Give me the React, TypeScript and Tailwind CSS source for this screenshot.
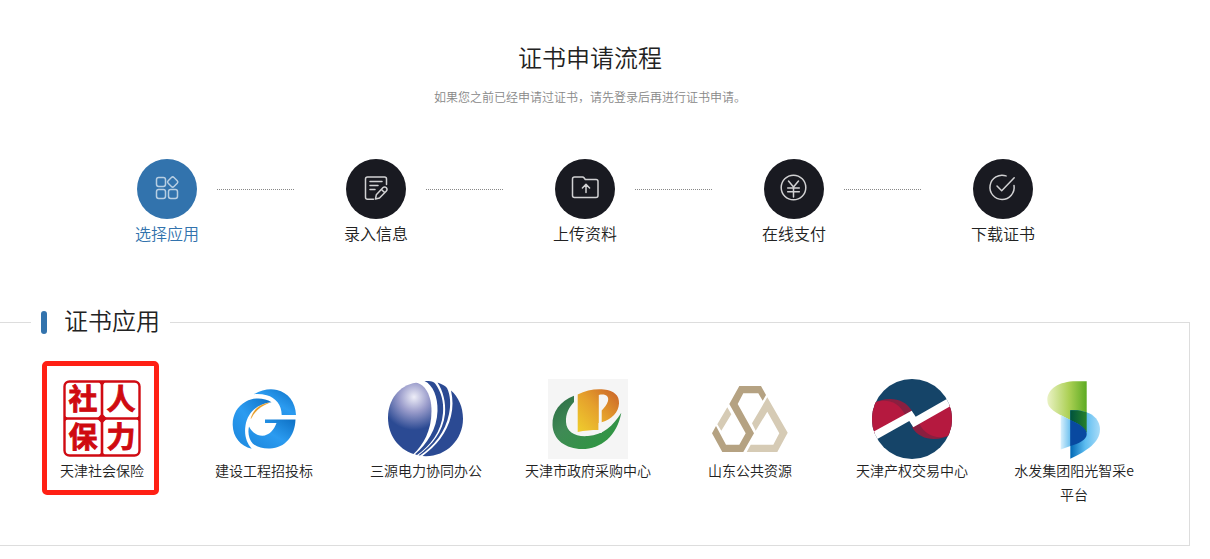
import type { ReactNode } from "react";

type Step = { label: string; icon: ReactNode; active?: boolean };
type CertApp = { name: string; logo: ReactNode; highlighted?: boolean };

const steps: Step[] = [
  {
    label: "选择应用",
    active: true,
    icon: (
      <>
        <rect x="19.5" y="18.5" width="9" height="9" rx="2.2" />
        <rect x="19.5" y="30.5" width="9" height="9" rx="2.2" />
        <rect x="31.5" y="30.5" width="9" height="9" rx="2.2" />
        <rect x="31.6" y="18.9" width="8.2" height="8.2" rx="1.8" transform="rotate(45 35.7 23)" />
      </>
    ),
  },
  {
    label: "录入信息",
    icon: (
      <>
        <path d="M40.5 25.5V20a2 2 0 0 0-2-2h-17a2 2 0 0 0-2 2v18.300a2 2 0 0 0 2 2h6" />
        <path d="M24 22.500h12M24 26.500h8M24 30.500h5" />
        <path d="M29.500 40l.8-4.200 6.800-7.200a2.100 2.100 0 0 1 3 0l.3.300a2.100 2.100 0 0 1 0 3l-6.900 7.200zM35.500 30.500l3 3" />
      </>
    ),
  },
  {
    label: "上传资料",
    icon: (
      <>
        <path d="M19.500 18h8a2 2 0 0 1 1.500.8l1.300 1.700h10.700a2 2 0 0 1 2 2v14a2 2 0 0 1-2 2H19.500a2 2 0 0 1-2-2V20a2 2 0 0 1 2-2z" />
        <path d="M31 33.500v-8M27.400 29l3.600-3.600 3.600 3.600" />
      </>
    ),
  },
  {
    label: "在线支付",
    icon: (
      <>
        <circle cx="29.500" cy="28.500" r="12.300" />
        <path d="M24.500 22l5 6 5-6M29.500 28v10M23.700 29h11.600M23.700 32.700h11.600" />
      </>
    ),
  },
  {
    label: "下载证书",
    icon: (
      <>
        <path d="M33 16.900a12.100 12.100 0 1 0 8 9.500" />
        <path d="M24 27l4.700 4.700L41.200 18.700" />
      </>
    ),
  },
];

const certApps: CertApp[] = [
  {
    name: "天津社会保险",
    highlighted: true,
    logo: (
      <>
        <rect x="2.500" y="2.500" width="75" height="74" rx="5" fill="#fff" stroke="#d00a12" strokeWidth="2.400" />
        <path d="M40 2v75M2 39.500h76" stroke="#d00a12" strokeWidth="2.600" />
        <path d="M36 2h8l-4 5zM36 77h8l-4-4zM35 39.500l5-5 5 5-5 5zM2 36v7l4-3.500zM78 36v7l-4-3.500z" fill="#d00a12" />
        <g
          fill="#cf0a10"
          stroke="#cf0a10"
          strokeWidth=".8"
          fontSize="29"
          fontWeight="700"
          textAnchor="middle"
          fontFamily="'Noto Sans CJK SC', sans-serif"
        >
          <text x="21" y="31">社</text>
          <text x="59" y="31">人</text>
          <text x="21" y="69">保</text>
          <text x="59" y="69">力</text>
        </g>
      </>
    ),
  },
  {
    name: "建设工程招投标",
    logo: (
      <>
        <defs>
          <linearGradient id="gBlue" x1="0" y1="1" x2="1" y2="0">
            <stop offset="0" stopColor="#1c86dc" />
            <stop offset=".5" stopColor="#2b9bf0" />
            <stop offset="1" stopColor="#0d70c4" />
          </linearGradient>
        </defs>
        <path d="M30 15.200C38 10.500 46 9.500 53 11c11 2.500 18.500 12 19 25H57.700c0-10-6-17.500-15-19.800-4-1-8-1.300-12.700-1z" fill="url(#gBlue)" />
        <path d="M47.500 23.200C40 18.500 30 18.200 22 22.500 13 27.500 8.500 36 8.700 46c.3 12 7.500 21 19 23.700C22.500 64 20 56 21.500 46.500 23.500 34 33 24.500 47.500 23.200z" fill="url(#gBlue)" />
        <path d="M41 40.500h30.500C71 57 61 69 46 69.500c-7 .3-13-1.500-17.300-5C25 60 23.500 54 25 47.500c3 6 8 9.300 13.500 9.200 6.500-.2 11.500-5.700 14-12.700H41z" fill="url(#gBlue)" />
        <path d="M27 39.500C29 31.500 35 25.500 44.500 24 37 27 31 31.500 27 39.500z" fill="#e59a20" stroke="#e59a20" strokeWidth=".4" />
      </>
    ),
  },
  {
    name: "三源电力协同办公",
    logo: (
      <>
        <defs>
          <radialGradient id="globeShine" gradientUnits="userSpaceOnUse" cx="28" cy="18" r="33">
            <stop offset="0" stopColor="#eeeef8" />
            <stop offset=".45" stopColor="#9a9ccb" />
            <stop offset="1" stopColor="#2b4a93" />
          </radialGradient>
        </defs>
        <path d="M30 3.700C13 6 2 21 2 38.500 2 56 12 70 27.500 75 37 66 45.500 52 45.500 32 45.500 16 39 5 30 3.700z" fill="url(#globeShine)" />
        <path d="M38.500 2C45 2 48 2.500 49.500 5 55 13 58 22 57 34 55.500 53 44 67 31 76l-2-.7C41 65 51 50 51.500 32 52 18 47 6 38.500 2z" fill="#2b4a93" />
        <path d="M51.500 3.500C56 5 59 6.500 61 9c3.500 7 4 17 2 26-3.500 18-15 32-29 41.500l-1.500-.3C46 66 57 53 59 35c1-12-2-23-7.500-31.500z" fill="#2b4a93" />
        <path d="M65 11.500C72.500 18 77 28 77 39.700 77 61 60 77.200 40 77.200l-3.500-.2C50 67 61 54 65 37c2-8 2-17 0-25.500z" fill="#2b4a93" />
      </>
    ),
  },
  {
    name: "天津市政府采购中心",
    logo: (
      <>
        <defs>
          <linearGradient id="pOrange" x1="0" y1="1" x2="1" y2="0">
            <stop offset="0" stopColor="#efce2e" />
            <stop offset=".5" stopColor="#e5a02c" />
            <stop offset="1" stopColor="#c9602a" />
          </linearGradient>
          <linearGradient id="pGreen" x1="0" y1="0" x2="1" y2="1">
            <stop offset="0" stopColor="#2c6b45" />
            <stop offset=".4" stopColor="#3f8a55" />
            <stop offset="1" stopColor="#2a9a3c" />
          </linearGradient>
        </defs>
        <rect width="80" height="80" fill="#f5f5f5" />
        <path d="M26 16.700C12 22 4 33 4.500 46 5 61 18 70 34 70 53 70 69 57 73.300 33.700 65 47 55 56 40 57 27 58 18.500 53 18 43c-.3-8 2.500-14 8-20z" fill="url(#pGreen)" />
        <path d="M29.700 15.500C38 11 48 9.500 56 10.500c10 1 15.500 6 15 14-.5 9-7 15.500-17.300 18.800L50.500 44v7c-7 0-14 .5-20.800 2z" fill="url(#pOrange)" />
        <path d="M50.800 16c6.500-1.500 10.500 1 9.200 6-1 4-4 7-6.300 9.500V54h-2.900z" fill="#f5f5f5" />
      </>
    ),
  },
  {
    name: "山东公共资源",
    logo: (
      <>
        <path d="M29.300 7H51l5 9-3.300 5.700-4.400-7.400h-15L27.700 25 44 54.300 33.300 73h-21L2 54.300 6 47l10 18.700h13.300l6.400-11.400L19.300 25z" fill="#b5a282" />
        <path d="M17.300 28.300l4 7-10 16.400-4-6.400zM57.300 18.300l20.400 35.400L67.300 73H36.700l4-7.300h22.600l6-11.400-12-21.600-11.600 19-3.700-7.400z" fill="#d6cbb5" />
      </>
    ),
  },
  {
    name: "天津产权交易中心",
    logo: (
      <>
        <defs>
          <clipPath id="roundel">
            <circle cx="40" cy="40" r="40" />
          </clipPath>
        </defs>
        <g clipPath="url(#roundel)">
          <rect width="80" height="80" fill="#154468" />
          <path d="M0 25C14 17 32 18 40 32L0 56z" fill="#8a1f40" />
          <path d="M0 25C11 19 26 21 33 36L0 56z" fill="#b5193f" />
          <path d="M80 55C66 63 48 62 40 48L80 24z" fill="#8a1f40" />
          <path d="M80 55C69 61 54 59 47 44L80 24z" fill="#b5193f" />
          <path d="M0 53.500L39.700 31.700l4 6L80 17v9.300L41.300 48.300l-4-6.300L0 63z" fill="#fff" />
        </g>
      </>
    ),
  },
  {
    name: "水发集团阳光智采e平台",
    logo: (
      <>
        <defs>
          <linearGradient id="leafGreen">
            <stop offset="0" stopColor="#eaf2c4" />
            <stop offset=".55" stopColor="#acd055" />
            <stop offset="1" stopColor="#5dab22" />
          </linearGradient>
          <linearGradient id="paleBlue">
            <stop offset="0" stopColor="#d8f0fd" />
            <stop offset="1" stopColor="#6cc0ee" />
          </linearGradient>
          <linearGradient id="deepBlue">
            <stop offset="0" stopColor="#0067b5" />
            <stop offset=".5" stopColor="#5cbcf0" />
            <stop offset="1" stopColor="#a9dcf8" />
          </linearGradient>
          <linearGradient id="darkGreen">
            <stop offset="0" stopColor="#00523d" />
            <stop offset="1" stopColor="#26802a" />
          </linearGradient>
        </defs>
        <path d="M52.700 2.300H42C25 2.300 13.300 10 13.300 21c0 9 9 13 20 18.500 9 4.500 16 8 19.400 14.200z" fill="url(#leafGreen)" />
        <path d="M26.700 36L36.500 41v26l-9.800 3.500z" fill="url(#paleBlue)" />
        <path d="M36.300 31.300C54 30 66 38 66 50.500 66 63 53 72 36.300 79.700z" fill="url(#deepBlue)" />
        <path d="M36.300 31.300c6-.4 11.500 0 16.400 2v20.400C50 48 43 44 36.300 41z" fill="url(#darkGreen)" />
        <path d="M36.300 41C45 45 52.700 49 52.700 55c0 6-8 9.500-16.400 12z" fill="#0849a0" />
      </>
    ),
  },
];

function StepItem({ label, icon, active }: Step) {
  return (
    <li className="flex items-start">
      <div className="w-16 shrink-0 text-center">
        <div
          className={
            active
              ? "mx-auto size-[60px] rounded-full bg-[#3273ad]"
              : "mx-auto size-[60px] rounded-full bg-[#191a21]"
          }
        >
          <svg
            viewBox="0 0 60 60"
            className={active ? "size-full text-white/65" : "size-full text-white/80"}
            fill="none"
            stroke="currentColor"
            strokeWidth="1.500"
            strokeLinecap="round"
            strokeLinejoin="round"
            aria-hidden="true"
          >
            {icon}
          </svg>
        </div>
        <p
          className={
            active
              ? "mt-0.5 text-base leading-6 whitespace-nowrap text-[#3273ad]"
              : "mt-0.5 text-base leading-6 whitespace-nowrap"
          }
        >
          {label}
        </p>
      </div>
      <div className="mt-[30px] mr-[50px] ml-[18px] flex-1 border-t border-dotted border-[#888]" />
    </li>
  );
}

function AppLink({ name, logo, highlighted }: CertApp) {
  return (
    <li className="relative">
      <a href="#" className="flex flex-col items-center px-[18px] text-center text-sm leading-6">
        <svg viewBox="0 0 80 80" className="size-20 overflow-visible" fill="none" aria-hidden="true">
          {logo}
        </svg>
        <span className="-mt-px">{name}</span>
      </a>
      {highlighted && (
        <div className="pointer-events-none absolute -top-[18px] left-[calc(50%-60px)] h-[134px] w-[117px] rounded-[5px] border-[5px] border-[#ff2014]" />
      )}
    </li>
  );
}

export default function App() {
  return (
    <main className="min-h-screen bg-white pr-5 pb-3 font-['Noto_Sans_CJK_SC',sans-serif] font-[350] text-[#222]">
      <header className="pt-[39px] pr-[10px] text-center">
        <h1 className="text-2xl leading-9">证书申请流程</h1>
        <p className="mt-[13px] text-xs leading-[18px] text-[#888]">
          如果您之前已经申请过证书，请先登录后再进行证书申请。
        </p>
      </header>

      <ol className="mt-[53px] grid grid-cols-5 pr-[10px] pl-[135px] [&>li:last-child>div:last-child]:invisible">
        {steps.map((step) => (
          <StepItem key={step.label} {...step} />
        ))}
      </ol>

      <fieldset className="mt-[59px] min-w-0 border border-l-0 border-[#ddd] pb-[39px]">
        <legend className="ml-[31px] flex items-start gap-[17px] px-[10px] pb-1 text-2xl leading-8">
          <span className="mt-[7px] h-[23px] w-1.5 rounded-[3px] bg-[#3273ad]" />
          证书应用
        </legend>
        <ul className="grid grid-cols-7 pt-[39px] pr-[34px] pl-[21px]">
          {certApps.map((app) => (
            <AppLink key={app.name} {...app} />
          ))}
        </ul>
      </fieldset>
    </main>
  );
}
